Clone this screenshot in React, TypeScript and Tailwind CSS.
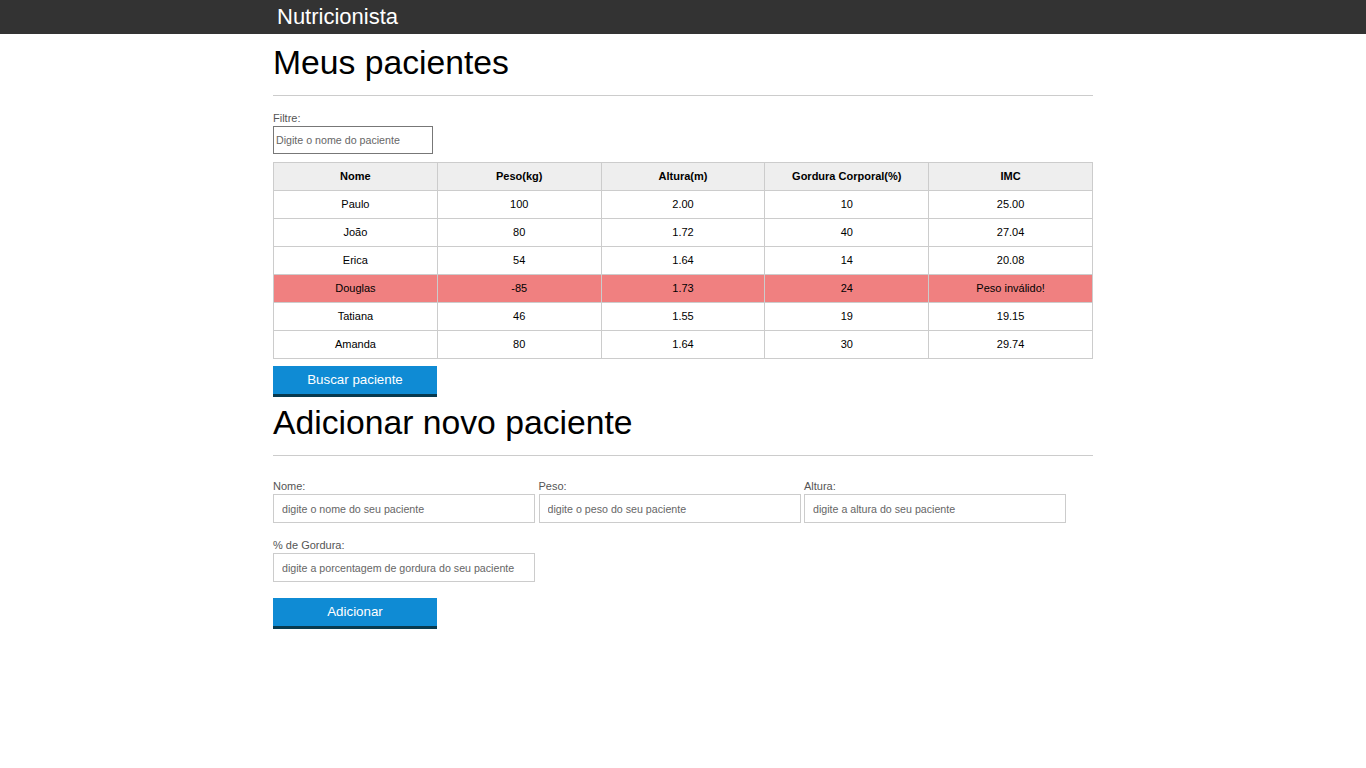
import React from 'react';

interface Paciente {
    nome: string;
    peso: string;
    altura: string;
    gordura: string;
    imc: string;
    invalido?: boolean;
}

const pacientes: Paciente[] = [
    { nome: 'Paulo', peso: '100', altura: '2.00', gordura: '10', imc: '25.00' },
    { nome: 'João', peso: '80', altura: '1.72', gordura: '40', imc: '27.04' },
    { nome: 'Erica', peso: '54', altura: '1.64', gordura: '14', imc: '20.08' },
    { nome: 'Douglas', peso: '-85', altura: '1.73', gordura: '24', imc: 'Peso inválido!', invalido: true },
    { nome: 'Tatiana', peso: '46', altura: '1.55', gordura: '19', imc: '19.15' },
    { nome: 'Amanda', peso: '80', altura: '1.64', gordura: '30', imc: '29.74' },
];

const colunas = ['Nome', 'Peso(kg)', 'Altura(m)', 'Gordura Corporal(%)', 'IMC'];

const Campo = ({ label, placeholder }: { label: string; placeholder: string }) => (
    <div className="flex w-[262px] flex-col">
        <label className="text-[11px] leading-[13px] text-[#555]">{label}</label>
        <input
            className="mt-[1px] h-[29px] w-full border border-[#ccc] px-[8px] text-[10.67px] outline-none placeholder:text-[#666]"
            placeholder={placeholder}
        />
    </div>
);

const Botao = ({ children }: { children: React.ReactNode }) => (
    <button className="h-[31px] w-[164px] border-b-[3px] border-[#083a4f] bg-[#0f8bd4] text-[13.33px] text-white">
        {children}
    </button>
);

export default function App() {
    return (
        <div className="min-h-screen bg-white font-['Liberation_Sans',Arial,sans-serif] text-black">
            {/* HEADER */}
            <header className="h-[34px] bg-[#333]">
                <div className="mx-auto w-[820px] px-[4px] pt-[5px] text-[22px] leading-[24px] text-white">
                    Nutricionista
                </div>
            </header>

            <main className="mx-auto w-[820px]">
                {/* MEUS PACIENTES */}
                <h1 className="mt-[8px] text-[33.7px] leading-[40px]">Meus pacientes</h1>
                <hr className="mt-[13px] border-t border-[#ccc]" />

                <div className="mt-[16px] flex flex-col">
                    <label className="text-[11px] leading-[13px] text-[#555]">Filtre:</label>
                    <input
                        className="mt-[1px] h-[28px] w-[160px] border border-[#777] px-[2px] text-[10.67px] outline-none placeholder:text-[#666]"
                        placeholder="Digite o nome do paciente"
                    />
                </div>

                <table className="mt-[8px] w-full table-fixed border-collapse text-[11px]">
                    <thead>
                        <tr className="h-[28px] bg-[#eee]">
                            {colunas.map((c) => (
                                <th key={c} className="border border-[#ccc] font-bold">
                                    {c}
                                </th>
                            ))}
                        </tr>
                    </thead>
                    <tbody>
                        {pacientes.map((p) => (
                            <tr key={p.nome} className={p.invalido ? 'h-[28px] bg-[#f08080]' : 'h-[28px]'}>
                                <td className="border border-[#ccc] text-center">{p.nome}</td>
                                <td className="border border-[#ccc] text-center">{p.peso}</td>
                                <td className="border border-[#ccc] text-center">{p.altura}</td>
                                <td className="border border-[#ccc] text-center">{p.gordura}</td>
                                <td className="border border-[#ccc] text-center">{p.imc}</td>
                            </tr>
                        ))}
                    </tbody>
                </table>

                <div className="mt-[7px]">
                    <Botao>Buscar paciente</Botao>
                </div>

                {/* ADICIONAR */}
                <h1 className="mt-[5px] text-[33.7px] leading-[40px]">Adicionar novo paciente</h1>
                <hr className="mt-[13px] border-t border-[#ccc]" />

                <form className="mt-[24px]" onSubmit={(e) => e.preventDefault()}>
                    <div className="flex gap-[3.5px]">
                        <Campo label="Nome:" placeholder="digite o nome do seu paciente" />
                        <Campo label="Peso:" placeholder="digite o peso do seu paciente" />
                        <Campo label="Altura:" placeholder="digite a altura do seu paciente" />
                    </div>
                    <div className="mt-[16px] flex">
                        <Campo label="% de Gordura:" placeholder="digite a porcentagem de gordura do seu paciente" />
                    </div>
                    <div className="mt-[16px]">
                        <Botao>Adicionar</Botao>
                    </div>
                </form>
            </main>
        </div>
    );
}
